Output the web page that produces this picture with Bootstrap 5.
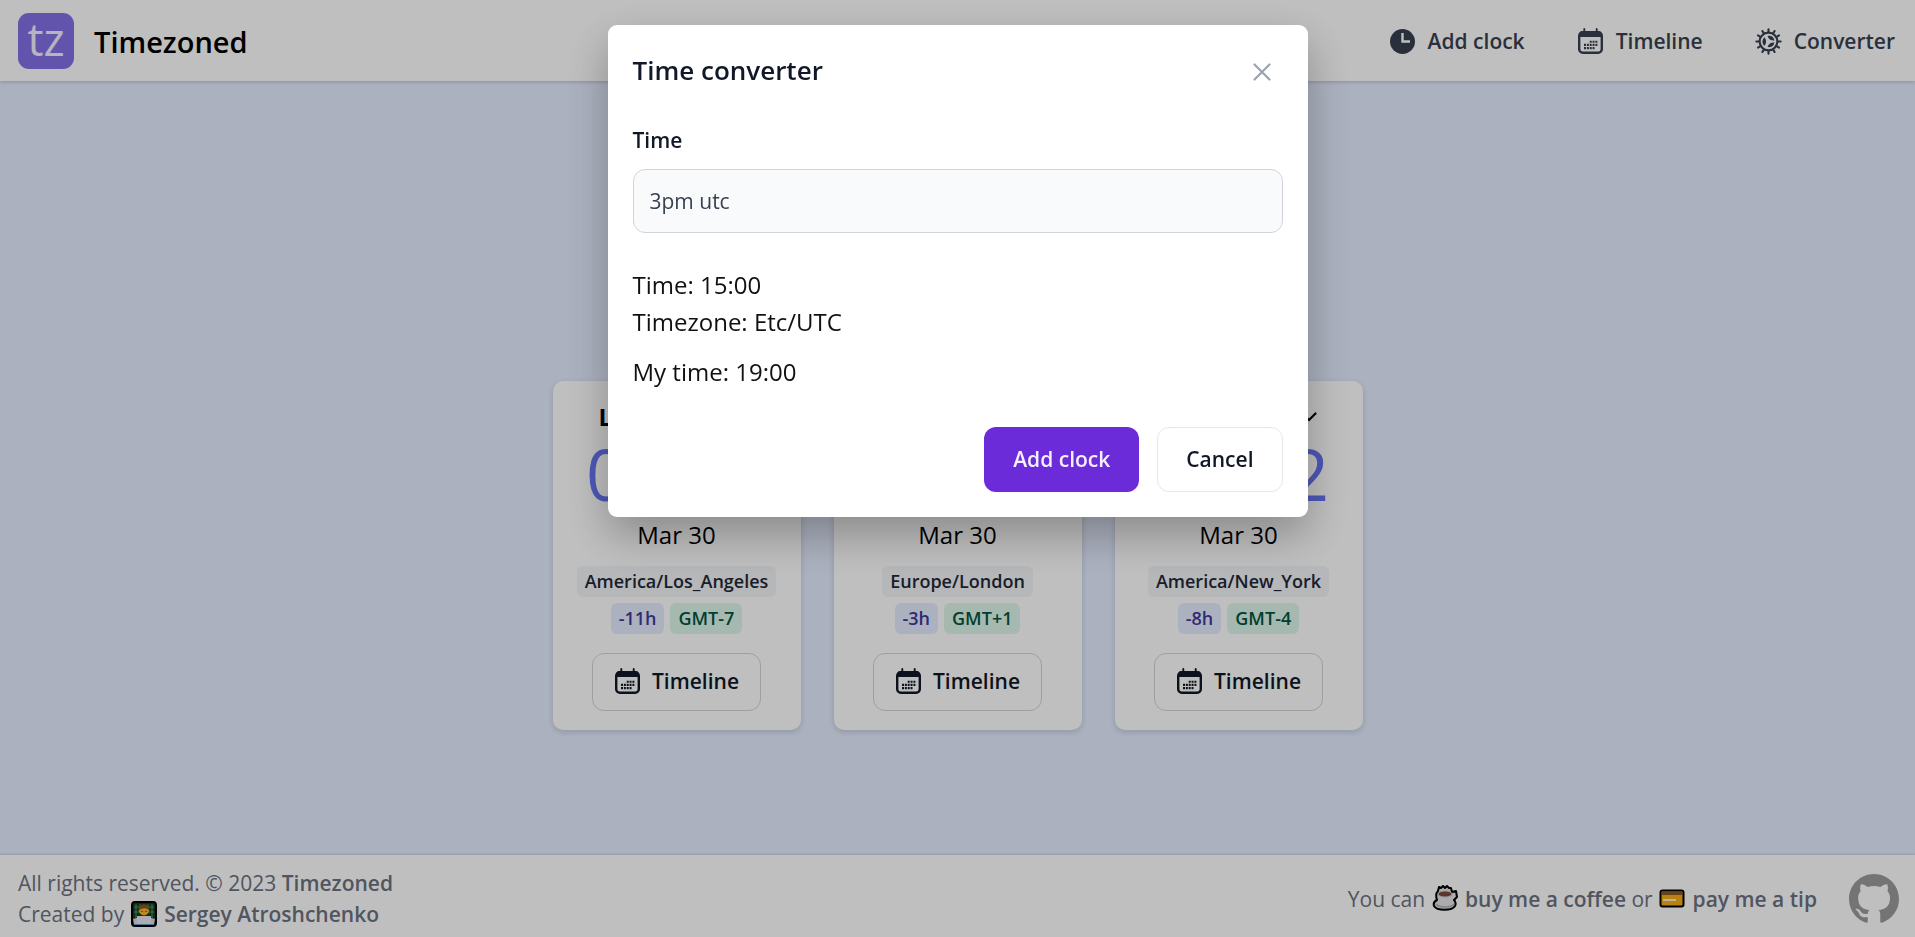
<!DOCTYPE html>
<html lang="en">
<head>
<meta charset="utf-8">
<meta name="viewport" content="width=device-width, initial-scale=1">
<title>Timezoned</title>
<link href="https://cdn.jsdelivr.net/npm/bootstrap@5.3.0/dist/css/bootstrap.min.css" rel="stylesheet">
<style>
  body { font-family: "Open Sans", "Noto Sans", sans-serif; font-size: 21px; line-height: 31px; background: #e5edff; color: #000; }
  a { text-decoration: none; color: inherit; }
  .site-header { padding: 13px 20px 12px 18px; box-shadow: 0 1px 4px rgba(0,0,0,.2); }
  .logo { width: 56px; height: 56px; border-radius: 11px; background: #8370e7; color: #f5f0ff; font-size: 45px; line-height: 52px; }
  .brand-name { font-size: 29px; font-weight: 600; }
  .site-nav { gap: 52px; color: #374151; font-weight: 600; }
  .icon { width: 27px; height: 27px; flex: none; }
  .clocks { gap: 33px; padding-top: 174px; }
  .clock { width: 248px; padding: 18px 18px 19px; border-radius: 10px; box-shadow: 0 2px 6px rgba(0,0,0,.16); }
  .city { width: 156px; font-size: 24px; font-weight: 700; line-height: 36px; }
  .digits { font-size: 71px; line-height: 78px; margin-bottom: 4px; color: #6875f5; font-weight: 400; }
  .day { font-size: 24px; line-height: 36px; margin-bottom: 13px; }
  .tag { padding: 0 8px; border-radius: 6px; font-size: 18px; line-height: 31px; font-weight: 600; }
  .tag-zone { background: #f3f4f6; color: #1f2937; }
  .tag-diff { background: #e5edff; color: #42389d; }
  .tag-gmt { background: #def7ec; color: #03543f; }
  .tags { gap: 6px; margin: 6px 0 19px; }
  .btn-timeline { height: 58px; padding: 0 21px; border: 1px solid #d1d5db; border-radius: 12px; font-size: 21px; font-weight: 600; color: #111827; gap: 11px; }
  .site-footer { padding: 13px 16px 7px 18px; color: #6b7280; box-shadow: 0 -1px 2px rgba(0,0,0,.14); }
  .site-footer a { font-weight: 600; }
  .emoji { width: 26px; height: 26px; margin: -5px 2px 0 1px; }
  .veil { background: rgba(0,0,0,.25); }
  .converter { max-width: 700px; margin-top: 25px; }
  .converter .modal-content { padding: 25px; border: 0; border-radius: 9px; box-shadow: 0 18px 44px rgba(0,0,0,.28); }
  .converter h1 { font-size: 26px; line-height: 40px; font-weight: 600; color: #111827; }
  .btn-x { width: 42px; height: 44px; color: #9ca3af; }
  .time-label { font-size: 21px; line-height: 28px; font-weight: 600; color: #111827; margin: 32px 0 15px; }
  .time-input { height: 64px; padding: 0 16px; border-radius: 12px; border-color: #d1d5db; background: #f9fafb; font-size: 21px; color: #374151; }
  .result { font-size: 24px; line-height: 37px; color: #111; margin-top: 33px; gap: 13px; }
  .actions { gap: 18px; margin-top: 37px; }
  .actions .btn { height: 65px; padding: 0 28px; border-radius: 12px; font-size: 21px; font-weight: 600; }
  .actions .btn-add { background: #6c2bd9; color: #f5f0ff; }
  .actions .btn-cancel { background: #fff; border-color: #e5e7eb; color: #111827; }
</style>
</head>
<body>
<svg class="d-none" xmlns="http://www.w3.org/2000/svg">
  <symbol id="i-cal" viewBox="0 0 27 27">
    <rect x="2.2" y="4.2" width="22.6" height="20.6" rx="3.6" fill="none" stroke="currentColor" stroke-width="2.4"/>
    <path d="M2 9V7a4 4 0 0 1 4-4h15a4 4 0 0 1 4 4v2z" fill="currentColor"/>
    <path d="M7.3 1v4M19.7 1v4" stroke="currentColor" stroke-width="1.9" stroke-linecap="round"/>
    <path d="M12.700 13.700h8.600M7 16.900h14.300M7 20.100h11" stroke="currentColor" stroke-width="2.100" stroke-dasharray="2 .85"/>
  </symbol>
  <symbol id="i-clock" viewBox="0 0 27 27">
    <circle cx="13.5" cy="13.5" r="12.5" fill="currentColor"/>
    <path d="M13.500 5v8.500h7.500" fill="none" stroke="#fff" stroke-width="2.400"/>
  </symbol>
  <symbol id="i-gear" viewBox="0 0 28 28">
    <g fill="none" stroke="currentColor">
      <circle cx="14" cy="14" r="9.2" stroke-width="2.2"/>
      <path stroke-width="2.2" stroke-linecap="round" d="M14 4V1.400M14 24v2.600M4 14H1.400M24 14h2.600M9 5.300L7.700 3.100M19 5.300l1.300-2.200M5.300 9L3.100 7.700M22.700 9l2.200-1.300M5.300 19l-2.200 1.300M22.700 19l2.200 1.300M9 22.700l-1.300 2.200M19 22.700l1.300 2.200"/>
    </g>
    <path fill="currentColor" d="M10 9.500c2 3 2 6 0 9-3-2.500-3-6.500 0-9zM13 8.200c4-.8 6.500 1.300 7.200 4.700-3.500.3-6-1.200-7.200-4.700zM13 19.800c4 .8 6.500-1.300 7.200-4.700-3.500-.3-6 1.200-7.200 4.700z"/>
  </symbol>
  <symbol id="i-down" viewBox="0 0 16 16">
    <path d="M1.500 4.500L8 11l6.500-6.500" fill="none" stroke="currentColor" stroke-width="2.200" stroke-linecap="round"/>
  </symbol>
</svg>

<div class="d-flex flex-column min-vh-100">
  <header class="site-header bg-white d-flex justify-content-between align-items-center">
    <a href="#" class="d-flex align-items-center gap-3">
      <span class="logo text-center">tz</span>
      <span class="brand-name ps-1">Timezoned</span>
    </a>
    <nav class="site-nav d-flex">
      <a href="#" class="d-flex align-items-center gap-2"><svg class="icon me-1"><use href="#i-clock"/></svg>Add clock</a>
      <a href="#" class="d-flex align-items-center gap-2"><svg class="icon me-1"><use href="#i-cal"/></svg>Timeline</a>
      <a href="#" class="d-flex align-items-center gap-2"><svg class="icon me-1"><use href="#i-gear"/></svg>Converter</a>
    </nav>
  </header>

  <main class="clocks flex-grow-1 d-flex flex-wrap justify-content-center align-content-center">
    <section class="clock bg-white d-flex flex-column align-items-center">
      <div class="city d-flex justify-content-between align-items-center text-nowrap">Los Angeles<svg width="16" height="16"><use href="#i-down"/></svg></div>
      <div class="digits">08:12</div>
      <div class="day">Mar 30</div>
      <span class="tag tag-zone">America/Los_Angeles</span>
      <div class="tags d-flex"><span class="tag tag-diff">-11h</span><span class="tag tag-gmt">GMT-7</span></div>
      <button type="button" class="btn btn-timeline d-flex align-items-center"><svg class="icon"><use href="#i-cal"/></svg>Timeline</button>
    </section>
    <section class="clock bg-white d-flex flex-column align-items-center">
      <div class="city d-flex justify-content-between align-items-center text-nowrap">London<svg width="16" height="16"><use href="#i-down"/></svg></div>
      <div class="digits">16:12</div>
      <div class="day">Mar 30</div>
      <span class="tag tag-zone">Europe/London</span>
      <div class="tags d-flex"><span class="tag tag-diff">-3h</span><span class="tag tag-gmt">GMT+1</span></div>
      <button type="button" class="btn btn-timeline d-flex align-items-center"><svg class="icon"><use href="#i-cal"/></svg>Timeline</button>
    </section>
    <section class="clock bg-white d-flex flex-column align-items-center">
      <div class="city d-flex justify-content-between align-items-center text-nowrap">New York<svg width="16" height="16"><use href="#i-down"/></svg></div>
      <div class="digits">11:12</div>
      <div class="day">Mar 30</div>
      <span class="tag tag-zone">America/New_York</span>
      <div class="tags d-flex"><span class="tag tag-diff">-8h</span><span class="tag tag-gmt">GMT-4</span></div>
      <button type="button" class="btn btn-timeline d-flex align-items-center"><svg class="icon"><use href="#i-cal"/></svg>Timeline</button>
    </section>
  </main>

  <footer class="site-footer bg-white d-flex justify-content-between align-items-center">
    <div>
      <div>All rights reserved. © 2023 <a href="#">Timezoned</a></div>
      <div>Created by
        <a href="#"><svg class="emoji" viewBox="0 0 26 26"><rect x="1" y="1" width="24" height="24" rx="3" fill="#123b24" stroke="#000" stroke-width="2"/><path d="M5 3v14M9 3v4M17 3v4M21 3v14M3 6h20M3 11h20" stroke="#4f9b57" stroke-width="1"/><circle cx="13" cy="9.500" r="5" fill="#f5b82e"/><path d="M7.500 10c-1-9 12-9 11 0-2-3-7-4-11 0z" fill="#8a5528"/><path d="M11 10v1M15 10v1" stroke="#222"/><path d="M3 24c0-6 4-8 10-8s10 2 10 8z" fill="#5b9fd0"/><path d="M6 15h14v8H6z" fill="#e9e9ee"/><path d="M2 18l4-1v6H3zM24 18l-4-1v6h3z" fill="#d9dbe2"/></svg>
        Sergey Atroshchenko</a></div>
    </div>
    <div class="d-flex align-items-center">
      <div>You can
        <a href="#"><svg class="emoji" viewBox="0 0 26 26"><path d="M6 6l1-4 2 1 2-2 2 2 2-2 2 2 2 0 1 4 4-1 1 6-3 3c2 2 2 4 1 6-3 5-18 5-21 0-1-3 1-5 3-6-1-3-1-7 1-9z" fill="#e4e5e9" stroke="#000" stroke-width="2" stroke-linejoin="round"/><ellipse cx="13" cy="9" rx="7" ry="3" fill="#784a36" stroke="#c8c8cc"/><path d="M4 19c3 4 15 4 18 0" fill="none" stroke="#aaaeb8" stroke-width="1.500"/></svg>
        buy me a coffee</a> or
        <a href="#"><svg class="emoji" viewBox="0 0 26 26"><rect x="1.500" y="5.500" width="23" height="16" rx="2" fill="#f5ae18" stroke="#000" stroke-width="2"/><path d="M2.500 8.500h21" stroke="#8a5a20" stroke-width="3"/><path d="M4 15h13" stroke="#fff0c0" stroke-width="2"/></svg>
        pay me a tip</a>
      </div>
      <a href="#" aria-label="GitHub" class="d-flex ms-4 ps-2"><svg width="50" height="50" viewBox="0 0 16 16" fill="#9b9b9b"><path d="M8 0C3.580 0 0 3.580 0 8c0 3.540 2.290 6.530 5.470 7.590.4.070.55-.17.55-.38 0-.19-.01-.82-.01-1.490-2.010.37-2.530-.49-2.690-.94-.09-.23-.48-.94-.82-1.130-.28-.15-.68-.52-.01-.53.63-.01 1.080.58 1.230.82.72 1.210 1.870.87 2.330.66.07-.52.28-.87.51-1.070-1.780-.2-3.640-.89-3.640-3.950 0-.87.31-1.590.82-2.150-.08-.2-.36-1.020.08-2.120 0 0 .67-.21 2.200.82.64-.18 1.320-.27 2-.27s1.360.09 2 .27c1.530-1.040 2.200-.82 2.200-.82.44 1.100.16 1.920.08 2.120.51.56.82 1.270.82 2.150 0 3.070-1.870 3.750-3.650 3.950.29.25.54.73.54 1.480 0 1.070-.01 1.930-.01 2.200 0 .21.15.46.55.38A8.010 8.010 0 0 0 16 8c0-4.420-3.580-8-8-8z"/></svg></a>
    </div>
  </footer>
</div>

<div class="modal veil d-block" tabindex="-1" role="dialog" aria-modal="true" aria-labelledby="converterTitle">
  <div class="modal-dialog converter">
    <form class="modal-content">
      <div class="d-flex justify-content-between align-items-start">
        <h1 id="converterTitle" class="mb-0">Time converter</h1>
        <button type="button" class="btn btn-x p-0 d-flex align-items-center justify-content-center" aria-label="Close"><svg width="18" height="18" viewBox="0 0 18 18"><path d="M1.500 1.500l15 15M16.500 1.500l-15 15" stroke="currentColor" stroke-width="2.200" stroke-linecap="round"/></svg></button>
      </div>
      <label for="time" class="time-label">Time</label>
      <input id="time" type="text" class="form-control time-input" value="3pm utc">
      <div class="result d-flex flex-column">
        <div>Time: 15:00<br>Timezone: Etc/UTC</div>
        <div>My time: 19:00</div>
      </div>
      <div class="actions d-flex justify-content-end">
        <button type="button" class="btn btn-add">Add clock</button>
        <button type="button" class="btn btn-cancel">Cancel</button>
      </div>
    </form>
  </div>
</div>
<script src="https://cdn.jsdelivr.net/npm/bootstrap@5.3.0/dist/js/bootstrap.bundle.min.js"></script>
</body>
</html>
